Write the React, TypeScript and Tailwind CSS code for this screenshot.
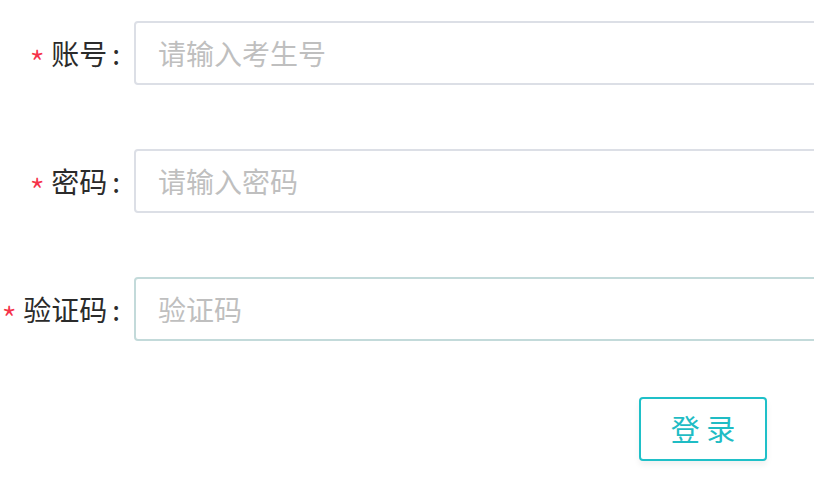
import React, { useState } from "react";

const fields = [
  { label: "账号", placeholder: "请输入考生号", type: "text", border: "border-[#dcdfe6]" },
  { label: "密码", placeholder: "请输入密码", type: "password", border: "border-[#dcdfe6]" },
  { label: "验证码", placeholder: "验证码", type: "text", border: "border-[#c3dada]" },
];

const App: React.FC = () => {
  const [values, setValues] = useState<string[]>(["", "", ""]);

  const handleChange = (index: number, value: string) => {
    setValues((prev) => prev.map((v, i) => (i === index ? value : v)));
  };

  return (
    <div
      className="w-[814px] h-[483px] overflow-hidden bg-white pt-[21px]"
      style={{ fontFamily: '"Noto Sans CJK SC", "Noto Sans", sans-serif' }}
    >
      {fields.map((f, index) => (
        <div key={index} className="flex items-center mb-[64px]">
          <label className="w-[134px] shrink-0 pr-[14px] flex items-center justify-end text-[28px] leading-[64px] text-[#2b2b2b] whitespace-nowrap">
            <span className="text-[#f5334a] text-[36px] font-light leading-none mr-[6px] translate-y-[9px]">*</span>
            {f.label}
            <span className="ml-[5px]">:</span>
          </label>
          <input
            type={f.type}
            value={values[index]}
            onChange={(e) => handleChange(index, e.target.value)}
            placeholder={f.placeholder}
            className={`w-[720px] shrink-0 h-[64px] rounded-[4px] border-2 ${f.border} px-[22px] text-[28px] text-[#606266] placeholder:text-[#bfbfbf] outline-none`}
          />
        </div>
      ))}
      <div className="flex pl-[639px] -mt-[8px]">
        <button className="w-[128px] h-[64px] rounded-[4px] border-2 border-[#1fc0c8] bg-white text-[29px] text-[#1fbcc4] shadow-[0_4px_6px_rgba(0,0,0,0.06)]">
          登 录
        </button>
      </div>
    </div>
  );
};

export default App;
